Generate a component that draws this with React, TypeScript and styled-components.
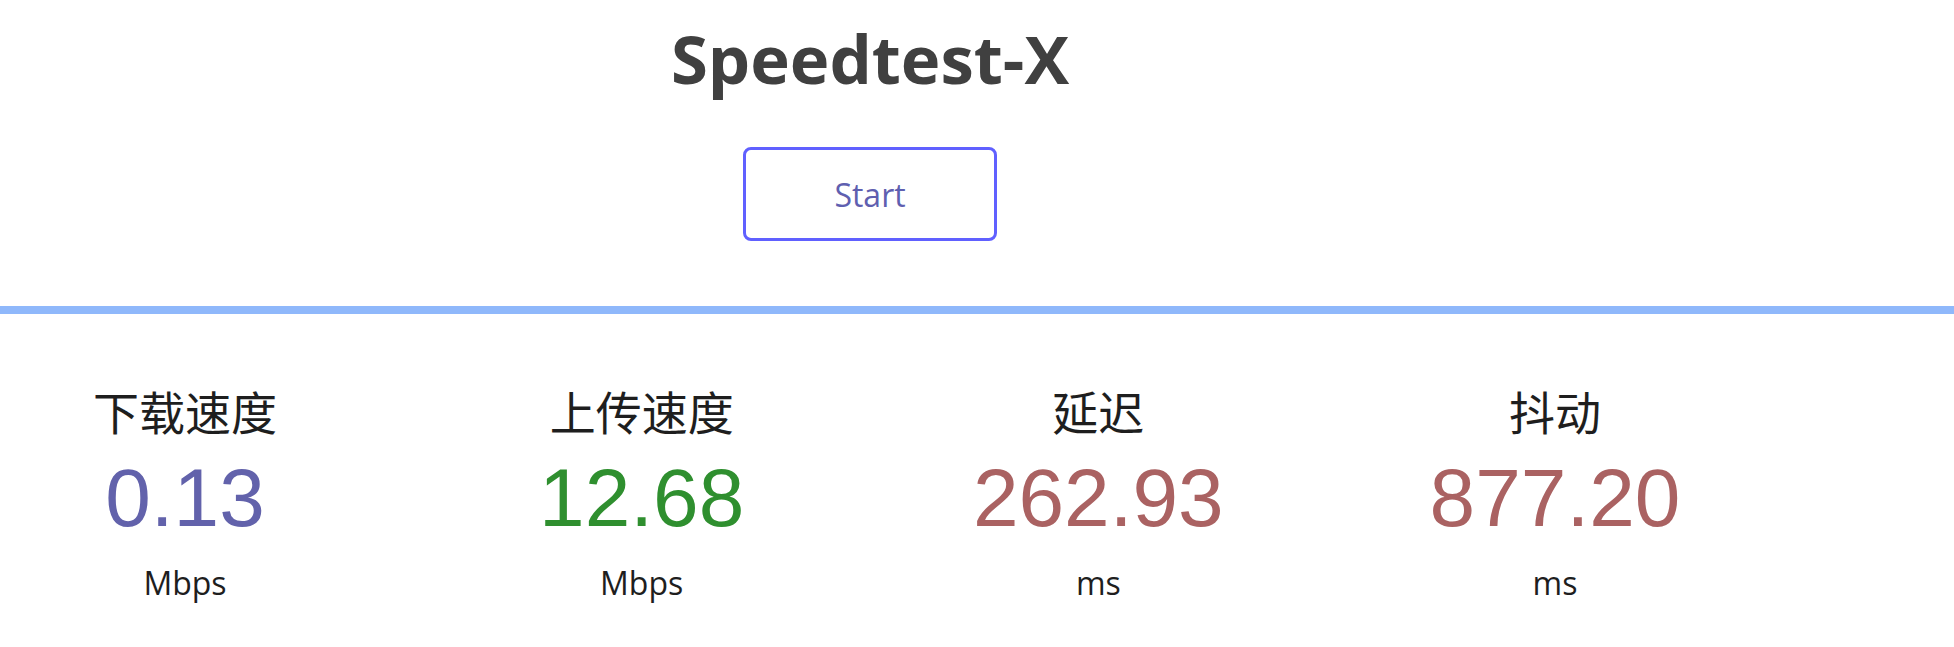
import styled, { createGlobalStyle } from "styled-components";

interface Metric {
    label: string;
    value: string;
    unit: string;
    color: string;
}

const metrics: Metric[] = [
    { label: "下载速度", value: "0.13", unit: "Mbps", color: "#6262ab" },
    { label: "上传速度", value: "12.68", unit: "Mbps", color: "#2f8f2f" },
    { label: "延迟", value: "262.93", unit: "ms", color: "#aa6262" },
    { label: "抖动", value: "877.20", unit: "ms", color: "#aa6262" },
];


export default function App() {
    // render
    return (
        <>
            <GlobalStyle />
            <Page>
                <Header>
                    <Title>Speedtest-X</Title>
                    <StartButton type="button">Start</StartButton>
                </Header>
                <Progress />
                <Stats>
                    {metrics.map((m) => (
                        <Stat key={m.label}>
                            <StatLabel>{m.label}</StatLabel>
                            <StatValue $color={m.color}>{m.value}</StatValue>
                            <StatUnit>{m.unit}</StatUnit>
                        </Stat>
                    ))}
                </Stats>
            </Page>
        </>
    );
}


const GlobalStyle = createGlobalStyle`
    html, body {
        margin: 0;
        padding: 0;
        background: #ffffff;
    }
    body {
        font-family: "Open Sans", "Noto Sans CJK SC", sans-serif;
        color: #1e1e1e;
    }
`;

const Page = styled.div`
    width: 100%;
    min-height: 647px;
    display: flex;
    flex-direction: column;
    overflow: hidden;
`;

const Header = styled.header`
    width: 1740px;
    display: flex;
    flex-direction: column;
    align-items: center;
    padding-top: 25px;
`;

const Title = styled.h1`
    margin: 0;
    font-family: "Open Sans", sans-serif;
    font-size: 67px;
    line-height: 67px;
    font-weight: 700;
    color: #404040;
`;

const StartButton = styled.button`
    margin-top: 55px;
    width: 254px;
    height: 94px;
    border: 3px solid #6060ff;
    border-radius: 8px;
    background: #ffffff;
    color: #5f5fb0;
    font-family: "Open Sans", sans-serif;
    font-size: 32px;
    cursor: pointer;
`;

const Progress = styled.div`
    margin-top: 65px;
    width: 100%;
    height: 8px;
    background: #8fb8fb;
`;

const Stats = styled.section`
    width: 1740px;
    display: flex;
    justify-content: space-between;
    padding-top: 77px;
`;

const Stat = styled.div`
    width: 370px;
    display: flex;
    flex-direction: column;
    align-items: center;
`;

const StatLabel = styled.div`
    font-family: "Liberation Sans", "Noto Sans CJK SC", sans-serif;
    font-size: 46px;
    line-height: 46px;
    color: #1e1e1e;
`;

const StatValue = styled.div<{ $color: string }>`
    margin-top: 20px;
    font-family: "Liberation Sans", sans-serif;
    font-size: 82px;
    line-height: 82px;
    color: ${(p) => p.$color};
`;

const StatUnit = styled.div`
    margin-top: 28px;
    font-family: "Open Sans", sans-serif;
    font-size: 32px;
    line-height: 32px;
    color: #1e1e1e;
`;
